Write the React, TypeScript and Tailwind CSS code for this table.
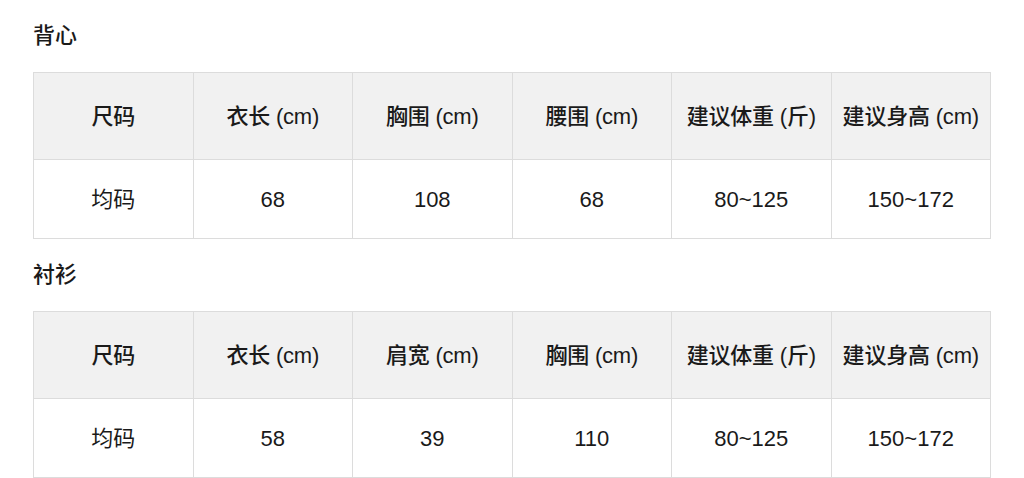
const font = { fontFamily: '"Liberation Sans", "Noto Sans CJK SC", sans-serif' };

const sections = [
  {
    title: '背心',
    header: ['尺码', '衣长 (cm)', '胸围 (cm)', '腰围 (cm)', '建议体重 (斤)', '建议身高 (cm)'],
    row: ['均码', '68', '108', '68', '80~125', '150~172'],
  },
  {
    title: '衬衫',
    header: ['尺码', '衣长 (cm)', '肩宽 (cm)', '胸围 (cm)', '建议体重 (斤)', '建议身高 (cm)'],
    row: ['均码', '58', '39', '110', '80~125', '150~172'],
  },
];

export default function App() {
  return (
    <main className="min-h-screen bg-white pl-[33px] pt-[22px] text-[#1a1a1a]" style={font}>
      {sections.map((s, i) => (
        <section key={s.title} className={i > 0 ? 'mt-[22px]' : ''}>
          <h2 className="text-[22px] leading-[28px] font-medium">{s.title}</h2>

          <table className="mt-[22px] w-[958px] table-fixed border-collapse text-[22px]">
            <thead>
              <tr className="h-[87px] bg-[#f1f1f1]">
                {s.header.map((h) => (
                  <th key={h} className="border border-[#dcdcdc] font-medium text-center whitespace-nowrap tracking-[-0.2px]">
                    {h}
                  </th>
                ))}
              </tr>
            </thead>
            <tbody>
              <tr className="h-[79px]">
                {s.row.map((c, j) => (
                  <td key={j} className="border border-[#dcdcdc] text-center">
                    {c}
                  </td>
                ))}
              </tr>
            </tbody>
          </table>
        </section>
      ))}
    </main>
  );
}
